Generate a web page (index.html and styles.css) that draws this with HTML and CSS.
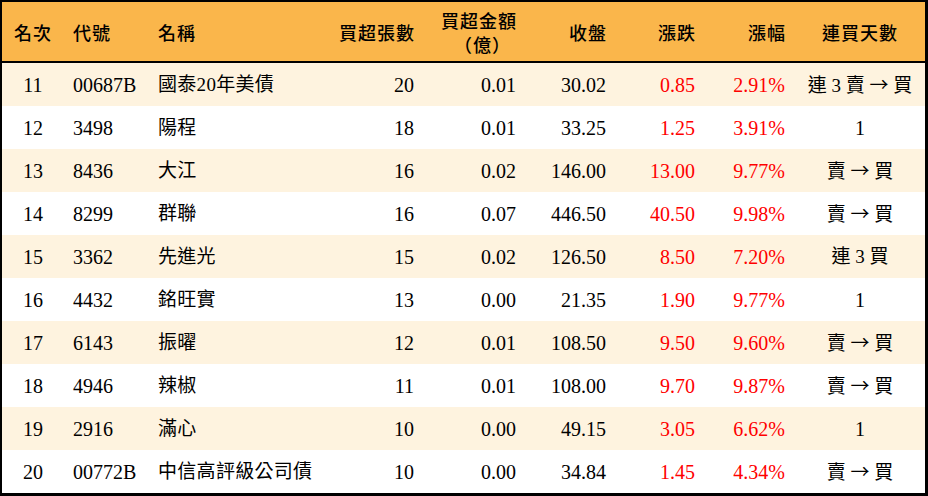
FILE: index.html
```html
<!DOCTYPE html>
<html lang="zh-Hant">
<head>
<meta charset="utf-8">
<title>買超排行</title>
<link rel="stylesheet" href="styles.css">
</head>
<body>
<div class="frame">
<table class="rank">
<colgroup>
<col class="c-rank"><col class="c-code"><col class="c-name"><col class="c-qty"><col class="c-amt"><col class="c-close"><col class="c-chg"><col class="c-pct"><col class="c-days">
</colgroup>
<thead>
<tr>
<th class="ctr">名次</th>
<th class="lft">代號</th>
<th class="lft">名稱</th>
<th class="rgt">買超張數</th>
<th class="rgt two">買超金額<br><span class="sub">（億）</span></th>
<th class="rgt">收盤</th>
<th class="rgt">漲跌</th>
<th class="rgt">漲幅</th>
<th class="ctr">連買天數</th>
</tr>
</thead>
<tbody>
<tr class="alt"><td class="ctr">11</td><td class="lft">00687B</td><td class="lft name">國泰20年美債</td><td class="rgt">20</td><td class="rgt">0.01</td><td class="rgt">30.02</td><td class="rgt up">0.85</td><td class="rgt up">2.91%</td><td class="ctr days">連 3 賣 <span class="arw">→</span> 買</td></tr>
<tr><td class="ctr">12</td><td class="lft">3498</td><td class="lft name">陽程</td><td class="rgt">18</td><td class="rgt">0.01</td><td class="rgt">33.25</td><td class="rgt up">1.25</td><td class="rgt up">3.91%</td><td class="ctr">1</td></tr>
<tr class="alt"><td class="ctr">13</td><td class="lft">8436</td><td class="lft name">大江</td><td class="rgt">16</td><td class="rgt">0.02</td><td class="rgt">146.00</td><td class="rgt up">13.00</td><td class="rgt up">9.77%</td><td class="ctr days">賣 <span class="arw">→</span> 買</td></tr>
<tr><td class="ctr">14</td><td class="lft">8299</td><td class="lft name">群聯</td><td class="rgt">16</td><td class="rgt">0.07</td><td class="rgt">446.50</td><td class="rgt up">40.50</td><td class="rgt up">9.98%</td><td class="ctr days">賣 <span class="arw">→</span> 買</td></tr>
<tr class="alt"><td class="ctr">15</td><td class="lft">3362</td><td class="lft name">先進光</td><td class="rgt">15</td><td class="rgt">0.02</td><td class="rgt">126.50</td><td class="rgt up">8.50</td><td class="rgt up">7.20%</td><td class="ctr days">連 3 買</td></tr>
<tr><td class="ctr">16</td><td class="lft">4432</td><td class="lft name">銘旺實</td><td class="rgt">13</td><td class="rgt">0.00</td><td class="rgt">21.35</td><td class="rgt up">1.90</td><td class="rgt up">9.77%</td><td class="ctr">1</td></tr>
<tr class="alt"><td class="ctr">17</td><td class="lft">6143</td><td class="lft name">振曜</td><td class="rgt">12</td><td class="rgt">0.01</td><td class="rgt">108.50</td><td class="rgt up">9.50</td><td class="rgt up">9.60%</td><td class="ctr days">賣 <span class="arw">→</span> 買</td></tr>
<tr><td class="ctr">18</td><td class="lft">4946</td><td class="lft name">辣椒</td><td class="rgt">11</td><td class="rgt">0.01</td><td class="rgt">108.00</td><td class="rgt up">9.70</td><td class="rgt up">9.87%</td><td class="ctr days">賣 <span class="arw">→</span> 買</td></tr>
<tr class="alt"><td class="ctr">19</td><td class="lft">2916</td><td class="lft name">滿心</td><td class="rgt">10</td><td class="rgt">0.00</td><td class="rgt">49.15</td><td class="rgt up">3.05</td><td class="rgt up">6.62%</td><td class="ctr">1</td></tr>
<tr><td class="ctr">20</td><td class="lft">00772B</td><td class="lft name">中信高評級公司債</td><td class="rgt">10</td><td class="rgt">0.00</td><td class="rgt">34.84</td><td class="rgt up">1.45</td><td class="rgt up">4.34%</td><td class="ctr days">賣 <span class="arw">→</span> 買</td></tr>
</tbody>
</table>
</div>
</body>
</html>
```
FILE: styles.css
```css
html, body {
  margin: 0;
  padding: 0;
  background: #ffffff;
}

.frame {
  width: 923px;
  border-top: 2px solid #000;
  border-left: 2px solid #000;
  border-right: 3px solid #000;
  border-bottom: 3px solid #000;
}

.rank {
  width: 923px;
  table-layout: fixed;
  border-collapse: collapse;
  border-spacing: 0;
  font-family: "Liberation Serif", "Noto Sans CJK TC", serif;
  color: #000;
}

.c-rank { width: 62px; }
.c-code { width: 85px; }
.c-name { width: 181px; }
.c-qty { width: 94px; }
.c-amt { width: 102px; }
.c-close { width: 90px; }
.c-chg { width: 89px; }
.c-pct { width: 90px; }
.c-days { width: 130px; }

.rank th {
  height: 59px;
  padding: 0;
  background: #fab64b;
  border-bottom: 2px solid #000;
  font-family: "Noto Sans CJK TC", sans-serif;
  font-size: 18px;
  font-weight: 500;
  letter-spacing: 1px;
  line-height: 22px;
  vertical-align: middle;
}

.rank th.two {
  line-height: 24px;
}

.rank th .sub {
  display: inline-block;
  margin-right: 6px;
}

.rank td {
  height: 43px;
  padding: 0;
  font-size: 20px;
  line-height: 24px;
  vertical-align: middle;
  white-space: nowrap;
}

.rank td.name {
  font-size: 19px;
  letter-spacing: 0.3px;
}

.rank td.days {
  font-size: 19px;
}

.arw {
  font-family: "Noto Sans CJK TC", sans-serif;
}

.rank tbody tr.alt td {
  background: #fef3df;
}

.ctr { text-align: center; }
.lft { text-align: left; padding-left: 9px !important; }
.rgt { text-align: right; padding-right: 10px !important; }

.rank th.rgt { padding-right: 9px !important; }

.up { color: #ff0000; }
```
